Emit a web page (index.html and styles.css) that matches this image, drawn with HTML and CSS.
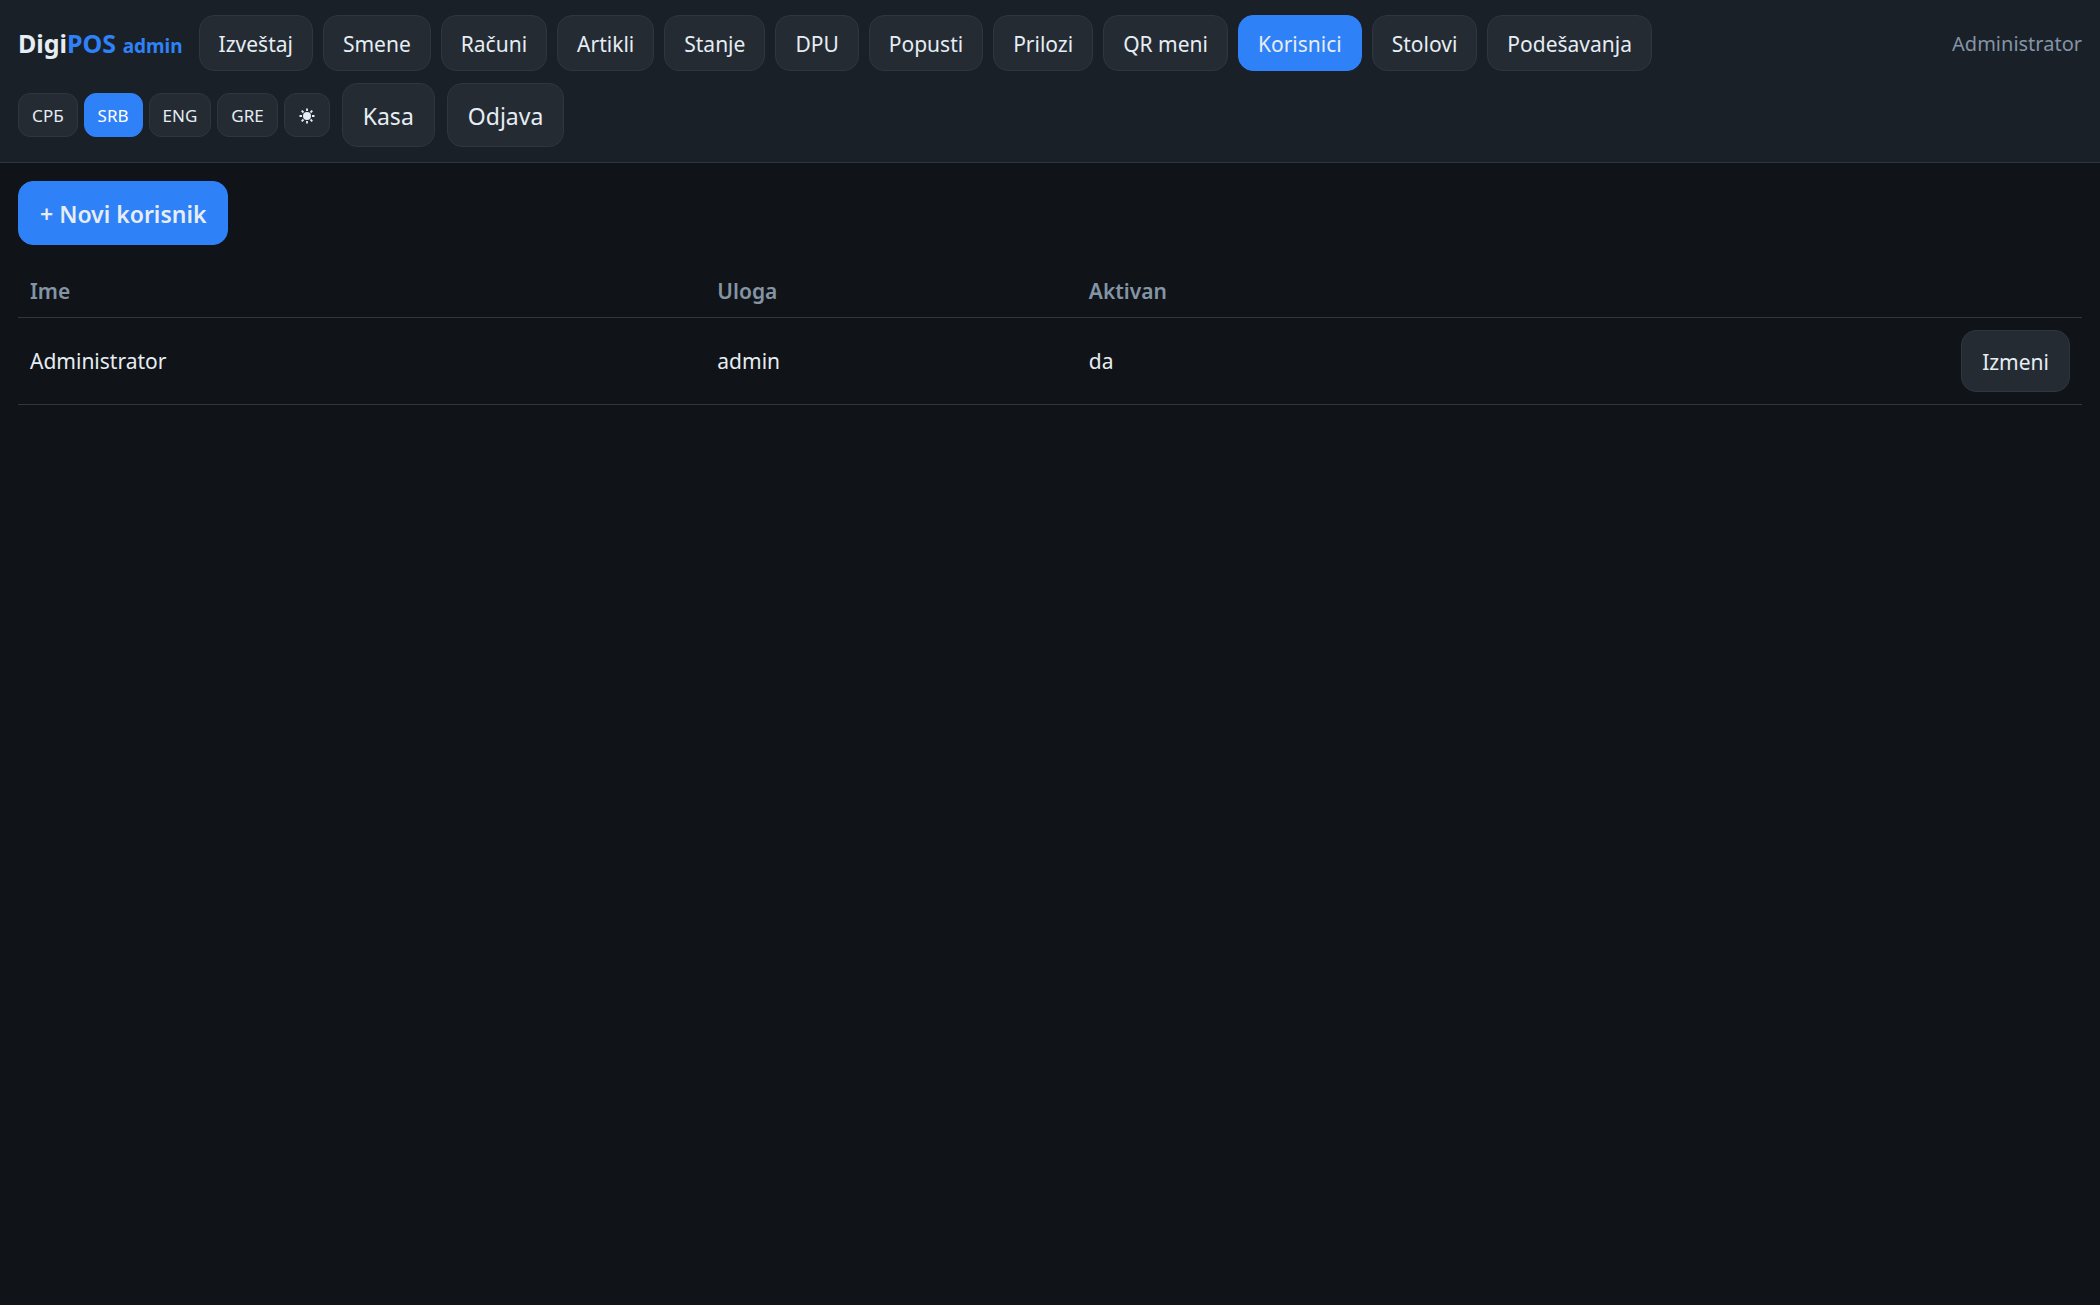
FILE: index.html
```
<!DOCTYPE html>
<html lang="sr-Latn">
<head>
    <meta charset="UTF-8">
    <meta name="viewport" content="width=device-width, initial-scale=1.0">
    <title>DigiPOS admin</title>
    <link rel="stylesheet" href="styles.css">
</head>
<body>
    <header class="topbar">
        <div class="logo">Digi<span>POS <small>admin</small></span></div>
        <nav class="tabs">
            <button type="button">Izveštaj</button>
            <button type="button">Smene</button>
            <button type="button">Računi</button>
            <button type="button">Artikli</button>
            <button type="button">Stanje</button>
            <button type="button">DPU</button>
            <button type="button">Popusti</button>
            <button type="button">Prilozi</button>
            <button type="button">QR meni</button>
            <button type="button" class="active">Korisnici</button>
            <button type="button">Stolovi</button>
            <button type="button">Podešavanja</button>
        </nav>
        <span class="spacer"></span>
        <span class="user">Administrator</span>
        <div class="actions">
            <div class="langs">
                <button type="button">СРБ</button>
                <button type="button" class="active">SRB</button>
                <button type="button">ENG</button>
                <button type="button">GRE</button>
                <button type="button" aria-label="Tema">
                    <svg class="sun" viewBox="0 0 18 18" width="18" height="18">
                        <circle cx="9" cy="9" r="4" fill="currentColor"/>
                        <path d="M9 1.5V4M9 14v2.5M1.5 9H4M14 9h2.5M3.7 3.7l1.8 1.8M12.5 12.5l1.8 1.8M3.7 14.3l1.8-1.8M12.5 5.5l1.8-1.8" stroke="currentColor" stroke-width="1.8"/>
                    </svg>
                </button>
            </div>
            <button type="button" class="btn">Kasa</button>
            <button type="button" class="btn">Odjava</button>
        </div>
    </header>

    <main>
        <button type="button" class="btn primary">+ Novi korisnik</button>
        <table class="list">
            <thead>
                <tr>
                    <th class="col-name">Ime</th>
                    <th class="col-role">Uloga</th>
                    <th>Aktivan</th>
                    <th></th>
                </tr>
            </thead>
            <tbody>
                <tr>
                    <td>Administrator</td>
                    <td>admin</td>
                    <td>da</td>
                    <td class="right"><button type="button" class="btn small">Izmeni</button></td>
                </tr>
            </tbody>
        </table>
    </main>
</body>
</html>
```
FILE: styles.css
```
:root {
    --bg: #101418;
    --panel: #1a2027;
    --panel2: #242b33;
    --line: #2d3742;
    --text: #e6edf3;
    --muted: #8494a5;
    --accent: #2f81f7;
}
* {
    box-sizing: border-box;
}
body {
    margin: 0;
    background: var(--bg);
    color: var(--text);
    font-family: "Noto Sans", "Open Sans", sans-serif;
    font-size: 21px;
    line-height: 30px;
}
button {
    font: inherit;
    color: var(--text);
    background: var(--panel2);
    border: 1px solid var(--line);
    cursor: pointer;
}

/* top bar */
.topbar {
    display: flex;
    flex-wrap: wrap;
    align-items: center;
    gap: 12px;
    padding: 15px 18px;
    background: var(--panel);
    border-bottom: 1px solid var(--line);
}
.logo {
    padding-top: 2px;
    font-size: 25px;
    font-weight: 700;
    margin-right: 4px;
}
.logo span {
    color: var(--accent);
}
.logo small {
    font-size: 19px;
}
.tabs {
    display: flex;
    flex-wrap: wrap;
    gap: 10px;
}
.tabs button {
    height: 56px;
    padding: 2px 19px 0;
    border-radius: 15px;
}
.spacer {
    flex: 1;
}
.user {
    padding-top: 2px;
    color: var(--muted);
    font-size: 20px;
}
.actions {
    display: flex;
    align-items: center;
    gap: 12px;
    width: 100%;
}
.langs {
    display: flex;
    gap: 6px;
}
.langs button {
    display: flex;
    align-items: center;
    height: 44px;
    padding: 1px 13px 0;
    border-radius: 12px;
    font-size: 17px;
}
.tabs .active,
.langs .active {
    background: var(--accent);
    border-color: var(--accent);
}
.langs .active {
    color: #fff;
}

.btn {
    height: 64px;
    padding: 2px 20px 0;
    border-radius: 15px;
    font-size: 23px;
}
.btn.primary {
    padding: 2px 21px 0;
    background: var(--accent);
    border-color: var(--accent);
    font-weight: 600;
}
.btn.small {
    height: 62px;
    font-size: 21px;
}

/* content */
main {
    padding: 18px;
}
.list {
    width: 100%;
    margin-top: 18px;
    border-collapse: separate;
    border-spacing: 0;
}
.list th,
.list td {
    padding: 12px;
    text-align: left;
    border-bottom: 1px solid var(--line);
}
.list th {
    padding: 13px 12px 11px;
    color: var(--muted);
    font-weight: 600;
}
.list .col-name {
    width: 33.3%;
}
.list .col-role {
    width: 18%;
}
.list .right {
    text-align: right;
}
.list .btn {
    display: inline-block;
    vertical-align: top;
}
```
